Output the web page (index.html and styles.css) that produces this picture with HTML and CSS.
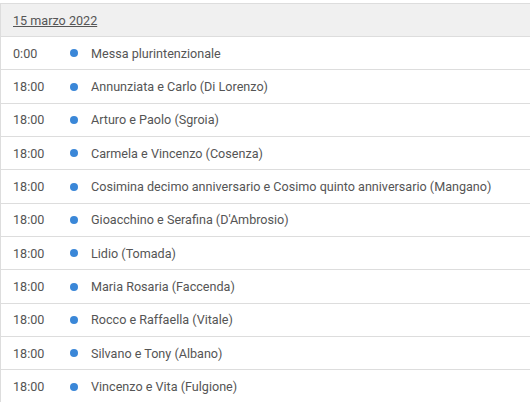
FILE: index.html
```html
<!DOCTYPE html>
<html lang="it">
<head>
<meta charset="utf-8">
<link rel="stylesheet" href="styles.css">
</head>
<body>
<div class="agenda">
  <div class="day-header"><a class="day-link" href="#">15 marzo 2022</a></div>
  <div class="row"><span class="time">0:00</span><span class="dot"></span><span class="title">Messa plurintenzionale</span></div>
  <div class="row"><span class="time">18:00</span><span class="dot"></span><span class="title">Annunziata e Carlo (Di Lorenzo)</span></div>
  <div class="row"><span class="time">18:00</span><span class="dot"></span><span class="title">Arturo e Paolo (Sgroia)</span></div>
  <div class="row"><span class="time">18:00</span><span class="dot"></span><span class="title">Carmela e Vincenzo (Cosenza)</span></div>
  <div class="row"><span class="time">18:00</span><span class="dot"></span><span class="title">Cosimina decimo anniversario e Cosimo quinto anniversario (Mangano)</span></div>
  <div class="row"><span class="time">18:00</span><span class="dot"></span><span class="title">Gioacchino e Serafina (D'Ambrosio)</span></div>
  <div class="row"><span class="time">18:00</span><span class="dot"></span><span class="title">Lidio (Tomada)</span></div>
  <div class="row"><span class="time">18:00</span><span class="dot"></span><span class="title">Maria Rosaria (Faccenda)</span></div>
  <div class="row"><span class="time">18:00</span><span class="dot"></span><span class="title">Rocco e Raffaella (Vitale)</span></div>
  <div class="row"><span class="time">18:00</span><span class="dot"></span><span class="title">Silvano e Tony (Albano)</span></div>
  <div class="row"><span class="time">18:00</span><span class="dot"></span><span class="title">Vincenzo e Vita (Fulgione)</span></div>
</div>
</body>
</html>
```
FILE: styles.css
```css
html, body {
  margin: 0;
  padding: 0;
  background: #fff;
}
body {
  font-family: Roboto, "Liberation Sans", sans-serif;
  font-size: 12.6px;
  color: #555;
  overflow: hidden;
}
.agenda {
  margin-top: 3px;
  border-top: 1px solid #ddd;
  border-left: 1px solid #ddd;
}
.day-header {
  background: #f0f0f0;
  height: 32px;
  display: flex;
  align-items: center;
  padding-left: 12px;
  border-bottom: 1px solid #ddd;
}
.day-link {
  color: #555;
  text-decoration: underline;
}
.row {
  display: flex;
  align-items: center;
  height: 32.35px;
  border-bottom: 1px solid #ddd;
  padding-left: 12px;
}
.time {
  width: 57px;
}
.dot {
  width: 8px;
  height: 8px;
  border-radius: 50%;
  background: #3a87d8;
  margin-right: 13px;
}
.title {
  white-space: nowrap;
}
```
